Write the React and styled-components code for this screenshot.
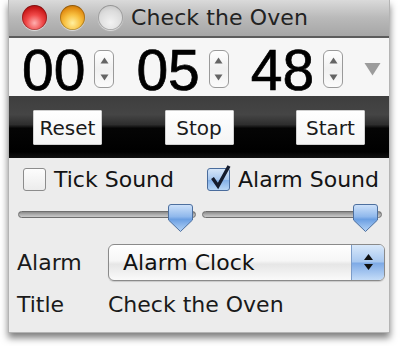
import React, { useState } from "react";
import styled, { createGlobalStyle } from "styled-components";

const GlobalStyle = createGlobalStyle`
  html, body { margin: 0; padding: 0; background: #ffffff; }
  body { font-family: "DejaVu Sans", "Noto Sans", sans-serif; }
`;

const Page = styled.div`
  width: 400px;
  height: 346px;
  padding: 0 0 0 8px;
  box-sizing: border-box;
`;

const Window = styled.div`
  width: 382px;
  height: 333px;
  background: #ececec;
  border: 1px solid #b4b4b4;
  border-top: none;
  box-sizing: border-box;
  box-shadow: 0 5px 7px rgba(0, 0, 0, 0.5);
  display: flex;
  flex-direction: column;
`;

const TitleBar = styled.div`
  height: 38px;
  flex: none;
  box-sizing: border-box;
  background: linear-gradient(#dadada, #b9b9b9 50%, #a6a6a6);
  border-bottom: 2px solid #5c5c5c;
  display: flex;
  align-items: center;
  padding: 0 0 2px 13px;
  gap: 13px;
`;

const lightColors = {
  red: "radial-gradient(circle at 50% 72%, #ffb0b0 0%, #f04848 38%, #c81818 70%, #7a0c0c 100%)",
  orange: "radial-gradient(circle at 50% 72%, #fff0a0 0%, #f8c040 38%, #e08a10 70%, #8a5200 100%)",
  gray: "radial-gradient(circle at 50% 70%, #f2f2f2 0%, #dcdcdc 55%, #b8b8b8 100%)",
};

const Light = styled.span`
  width: 25px;
  height: 25px;
  border-radius: 50%;
  background: ${(p) => lightColors[p.$color]};
  box-shadow: inset 0 0 0 1px rgba(0, 0, 0, 0.25), 0 1px 1px rgba(255, 255, 255, 0.6);
  flex: none;
`;

const TitleText = styled.span`
  margin-left: -5px;
  font-size: 22px;
  color: #222;
  letter-spacing: 0.1px;
`;

const TimerRow = styled.div`
  height: 58px;
  flex: none;
  background: #f6f6f6;
  display: flex;
  align-items: center;
  padding: 4px 0 0 13px;
  box-sizing: border-box;
  gap: 22px;
`;

const TimeGroup = styled.div`
  display: flex;
  align-items: center;
  gap: 9px;
`;

const Digits = styled.span`
  font-family: "Liberation Sans", Arial, sans-serif;
  font-size: 57px;
  line-height: 1;
  color: #000;
  -webkit-text-stroke: 0.7px #000;
  position: relative;
  top: 1px;
`;

const StepperBox = styled.div`
  width: 20px;
  height: 38px;
  box-sizing: border-box;
  border: 1px solid #9a9a9a;
  border-radius: 6px;
  background: linear-gradient(#ffffff, #f0f0f0 50%, #fbfbfb);
  display: flex;
  flex-direction: column;
  align-items: center;
  justify-content: space-between;
  padding: 6px 0;
`;

const Arrow = styled.svg`
  display: block;
`;

function Stepper() {
  return (
    <StepperBox>
      <Arrow width="9" height="7" viewBox="0 0 9 7">
        <path d="M4.5 0.5 L8.5 6.5 L0.5 6.5 Z" fill="#646464" />
      </Arrow>
      <Arrow width="9" height="7" viewBox="0 0 9 7">
        <path d="M0.5 0.5 L8.5 0.5 L4.5 6.5 Z" fill="#646464" />
      </Arrow>
    </StepperBox>
  );
}

const Disclosure = styled.svg`
  margin-left: -1px;
  display: block;
`;

const ButtonBar = styled.div`
  height: 62px;
  flex: none;
  background: linear-gradient(#3e3e3e 0%, #454545 30%, #2e2e2e 46%, #050505 52%, #000 90%, #111 100%);
  display: flex;
  align-items: center;
  justify-content: space-between;
  padding: 0 24px 0 24px;
`;

const BarButton = styled.button`
  width: 69px;
  height: 35px;
  margin-top: 1px;
  background: linear-gradient(#ffffff, #f4f4f4);
  border: 1px solid #d0d0d0;
  border-radius: 1px;
  font-family: "DejaVu Sans", sans-serif;
  font-size: 20px;
  color: #1a1a1a;
  padding: 0;
  cursor: pointer;
`;

const Columns = styled.div`
  display: grid;
  grid-template-columns: 178px 180px;
  column-gap: 6px;
  padding: 0 0 0 9px;
`;

const CheckRow = styled(Columns)`
  height: 41px;
  align-items: center;
  padding-top: 1px;
`;

const CheckLabel = styled.label`
  display: flex;
  align-items: center;
  gap: 8px;
  font-size: 22px;
  color: #141414;
  padding-left: ${(p) => p.$indent}px;
`;

const Box = styled.span`
  width: 23px;
  height: 23px;
  box-sizing: border-box;
  border-radius: 3px;
  border: 1px solid ${(p) => (p.$checked ? "#4a6c9c" : "#8c8c8c")};
  background: ${(p) =>
    p.$checked
      ? "linear-gradient(#d6e6f8, #a7c7ee 50%, #80aee6 52%, #b8d6f6)"
      : "linear-gradient(#fdfdfd, #ececec)"};
  position: relative;
  flex: none;
`;

const Check = styled.svg`
  position: absolute;
  left: 1px;
  top: -5px;
`;

const SliderRow = styled(Columns)`
  height: 34px;
  align-items: center;
`;

const SliderWrap = styled.div`
  position: relative;
  height: 30px;
  display: flex;
  align-items: center;
`;

const Track = styled.div`
  width: 100%;
  height: 7px;
  box-sizing: border-box;
  border-radius: 4px;
  border: 1px solid #6e6e6e;
  background: linear-gradient(#8a8a8a, #b4b4b4 60%, #c8c8c8);
  margin-top: -5px;
`;

const Knob = styled.svg`
  position: absolute;
  top: 1px;
`;

function Slider({ value, max }) {
  const left = (value / max) * 150;
  return (
    <SliderWrap>
      <Track />
      <Knob width="27" height="30" viewBox="0 0 27 30" style={{ left }}>
        <defs>
          <linearGradient id="kg" x1="0" y1="0" x2="0" y2="1">
            <stop offset="0" stopColor="#cfe2fa" />
            <stop offset="0.45" stopColor="#8fb8ec" />
            <stop offset="0.55" stopColor="#6b9fe2" />
            <stop offset="1" stopColor="#b6d4f6" />
          </linearGradient>
        </defs>
        <path
          d="M4 1.5 H23 Q25.5 1.5 25.5 4 V17 L13.5 28.5 L1.5 17 V4 Q1.5 1.5 4 1.5 Z"
          fill="url(#kg)"
          stroke="#4d6f9e"
          strokeWidth="1"
        />
      </Knob>
    </SliderWrap>
  );
}

const FormRow = styled.div`
  display: grid;
  grid-template-columns: 91px 277px;
  align-items: center;
  padding-left: 8px;
  height: ${(p) => p.$h}px;
  margin-top: ${(p) => p.$mt || 0}px;
`;

const FieldLabel = styled.span`
  font-size: 22px;
  color: #1a1a1a;
`;

const FieldValue = styled.span`
  font-size: 22px;
  color: #1a1a1a;
`;

const Popup = styled.div`
  height: 37px;
  box-sizing: border-box;
  border: 1px solid #8a8a8a;
  border-radius: 6px;
  background: linear-gradient(#ffffff, #f6f6f6 45%, #e6e6e6 55%, #fafafa);
  display: flex;
  align-items: stretch;
  overflow: hidden;
  box-shadow: 0 1px 1px rgba(0, 0, 0, 0.15);
`;

const PopupText = styled.span`
  flex: 1;
  display: flex;
  align-items: center;
  padding-left: 14px;
  font-size: 22px;
  color: #111;
`;

const PopupArrows = styled.div`
  width: 32px;
  border-left: 1px solid #7c9cc8;
  background: linear-gradient(#d8e8fa, #a8c8f0 48%, #7eaae6 52%, #c4dcf8);
  display: flex;
  flex-direction: column;
  align-items: center;
  justify-content: center;
  gap: 4px;
`;

export default function App() {
  const [tick, setTick] = useState(false);
  const [alarm, setAlarm] = useState(true);
  return (
    <Page>
      <GlobalStyle />
      <Window>
        <TitleBar>
          <Light $color="red" />
          <Light $color="orange" />
          <Light $color="gray" />
          <TitleText>Check the Oven</TitleText>
        </TitleBar>
        <TimerRow>
          <TimeGroup>
            <Digits>00</Digits>
            <Stepper />
          </TimeGroup>
          <TimeGroup>
            <Digits>05</Digits>
            <Stepper />
          </TimeGroup>
          <TimeGroup>
            <Digits>48</Digits>
            <Stepper />
          </TimeGroup>
          <Disclosure width="17" height="14" viewBox="0 0 17 14">
            <path d="M0.5 1 L16.5 1 L8.5 13.5 Z" fill="#9c9c9c" />
          </Disclosure>
        </TimerRow>
        <ButtonBar>
          <BarButton>Reset</BarButton>
          <BarButton>Stop</BarButton>
          <BarButton>Start</BarButton>
        </ButtonBar>
        <CheckRow>
          <CheckLabel $indent={5} onClick={() => setTick(!tick)}>
            <Box $checked={tick}>
              {tick && (
                <Check width="22" height="26" viewBox="0 0 22 26">
                  <path d="M3 15 L9 23 L20 2" fill="none" stroke="#111" strokeWidth="3" />
                </Check>
              )}
            </Box>
            Tick Sound
          </CheckLabel>
          <CheckLabel $indent={5} onClick={() => setAlarm(!alarm)}>
            <Box $checked={alarm}>
              {alarm && (
                <Check width="22" height="26" viewBox="0 0 22 26">
                  <path d="M3.5 14 L9 22 L20 2" fill="none" stroke="#141b2c" strokeWidth="3.4" />
                </Check>
              )}
            </Box>
            Alarm Sound
          </CheckLabel>
        </CheckRow>
        <SliderRow>
          <Slider value={149} max={150} />
          <Slider value={150} max={150} />
        </SliderRow>
        <FormRow $h={38} $mt={9}>
          <FieldLabel>Alarm</FieldLabel>
          <Popup>
            <PopupText>Alarm Clock</PopupText>
            <PopupArrows>
              <svg width="9" height="6" viewBox="0 0 9 6">
                <path d="M4.5 0 L9 6 L0 6 Z" fill="#111" />
              </svg>
              <svg width="9" height="6" viewBox="0 0 9 6">
                <path d="M0 0 L9 0 L4.5 6 Z" fill="#111" />
              </svg>
            </PopupArrows>
          </Popup>
        </FormRow>
        <FormRow $h={40} $mt={3}>
          <FieldLabel>Title</FieldLabel>
          <FieldValue>Check the Oven</FieldValue>
        </FormRow>
      </Window>
    </Page>
  );
}
